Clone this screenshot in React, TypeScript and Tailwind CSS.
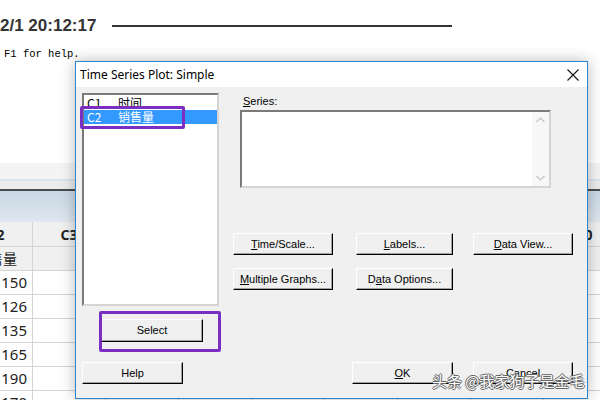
import type { ReactNode } from 'react';

const cols = ['C2', 'C3', 'C4', 'C5', 'C6', 'C7', 'C8', 'C9', 'C10'];
const values = ['150', '126', '135', '165', '190', '170'];

function Btn({ w, children, className = '' }: { w: string; children: ReactNode; className?: string }) {
  return (
    <div
      className={`flex h-[22px] ${w} shrink-0 items-center justify-center border border-t-white border-l-white border-r-black border-b-black bg-[#f0f0f0] text-[11px] text-black shadow-[inset_-1px_-1px_0_#a0a0a0] ${className}`}
    >
      <span>{children}</span>
    </div>
  );
}

function Sheet() {
  return (
    <div className="mt-[102px] flex flex-col" style={{ fontFamily: '"Noto Sans", "Noto Sans CJK SC", sans-serif' }}>
      <div className="h-[16px] bg-[#f4f4f4]" />
      <div className="h-[2px] bg-[#d6e4f1]" />
      <div className="h-[8px] bg-[#ececec]" />
      <div className="h-[2px] bg-[#4d4d4d]" />
      <div className="h-[31px] bg-gradient-to-b from-[#c9d7e4] to-[#dfe7ef]" />
      <div className="-ml-[40px] flex h-[25px] border-b border-[#d4d4d4] bg-[#f0f0f0]">
        {cols.map((c) => (
          <div key={c} className="flex w-[73px] shrink-0 items-center justify-center border-r border-[#d4d4d4] text-[14px] font-bold text-[#222]">
            {c}
          </div>
        ))}
      </div>
      <div className="-ml-[40px] flex h-[24px] border-b border-[#d4d4d4] bg-[#f0f0f0]">
        {cols.map((c, i) => (
          <div key={c} className="flex w-[73px] shrink-0 items-center justify-center border-r border-[#d4d4d4] text-[14px] text-[#222]">
            {i === 0 ? '销售量' : ''}
          </div>
        ))}
      </div>
      {values.map((v) => (
        <div key={v} className="-ml-[40px] flex h-[24px] border-b border-[#d4d4d4] bg-white">
          {cols.map((c, i) => (
            <div key={c} className="flex w-[73px] shrink-0 items-center justify-end border-r border-[#d4d4d4] pr-[5px] text-[15px] text-[#222]">
              {i === 0 ? v : ''}
            </div>
          ))}
        </div>
      ))}
    </div>
  );
}

function Dialog() {
  return (
    <div
      className="absolute left-[75px] top-[61px] flex h-[338px] w-[513px] flex-col border border-[#2a84cf] bg-[#f0f0f0] shadow-[0_0_14px_rgba(0,0,0,0.28)]"
      style={{ fontFamily: '"Liberation Sans", "Noto Sans CJK SC", sans-serif' }}
    >
      <div className="flex h-[25px] items-center justify-between bg-white pl-[4px] pr-[8px]">
        <span className="text-[12px] text-black" style={{ fontFamily: '"Noto Sans", sans-serif' }}>
          Time Series Plot: Simple
        </span>
        <svg width="12" height="12" viewBox="0 0 12 12">
          <path d="M0.5 0.5 L11.5 11.5 M11.5 0.5 L0.5 11.5" stroke="#111" strokeWidth="1.1" />
        </svg>
      </div>
      <div className="relative flex flex-1">
        <div className="flex w-[157px] shrink-0 flex-col pl-[6px]">
          <div className="mt-[6px] h-[213px] w-[137px] border-2 border-t-[#7a7a7a] border-l-[#7a7a7a] border-r-[#d4d4d4] border-b-[#d4d4d4] bg-white pt-[1px] text-[12px]" style={{ fontFamily: '"Noto Sans CJK SC", sans-serif' }}>
            <div className="flex h-[14px] items-center pl-[3px] leading-none text-black">
              <span className="w-[31px]">C1</span>
              <span>时间</span>
            </div>
            <div className="flex h-[14px] items-center bg-[#3399ff] pl-[3px] leading-none text-white">
              <span className="w-[31px]">C2</span>
              <span>销售量</span>
            </div>
          </div>
          <Btn w="w-[102px]" className="mt-[13px] ml-[19px] h-[23px]">Select</Btn>
          <Btn w="w-[101px]" className="mt-[20px]">Help</Btn>
        </div>
        <div className="flex flex-col">
          <div className="mt-[7px] ml-[10px] h-[14px] text-[11px] leading-[14px] text-black">
            <span className="underline">S</span>eries:
          </div>
          <div className="mt-[2px] ml-[7px] flex h-[78px] w-[311px] border-2 border-t-[#7a7a7a] border-l-[#7a7a7a] border-r-[#d4d4d4] border-b-[#d4d4d4] bg-white">
            <div className="flex-1" />
            <div className="flex w-[17px] flex-col items-center justify-between bg-[#f7f7f7] py-[5px]">
              <svg width="9" height="6" viewBox="0 0 9 6">
                <path d="M0.5 5 L4.5 1 L8.5 5" stroke="#c2c2c2" strokeWidth="1.2" fill="none" />
              </svg>
              <svg width="9" height="6" viewBox="0 0 9 6">
                <path d="M0.5 1 L4.5 5 L8.5 1" stroke="#c2c2c2" strokeWidth="1.2" fill="none" />
              </svg>
            </div>
          </div>
          <div className="mt-[45px] flex">
            <Btn w="w-[100px]"><span className="underline">T</span>ime/Scale...</Btn>
            <Btn w="w-[97px]" className="ml-[23px]"><span className="underline">L</span>abels...</Btn>
            <Btn w="w-[100px]" className="ml-[20px]"><span className="underline">D</span>ata View...</Btn>
          </div>
          <div className="mt-[13px] flex">
            <Btn w="w-[100px]"><span className="underline">M</span>ultiple Graphs...</Btn>
            <Btn w="w-[97px]" className="ml-[23px]">D<span className="underline">a</span>ta Options...</Btn>
          </div>
          <div className="mt-[72px] ml-[119px] flex">
            <Btn w="w-[101px]"><span className="underline">O</span>K</Btn>
            <Btn w="w-[100px]" className="ml-[20px]">Cancel</Btn>
          </div>
        </div>
        <div className="absolute left-[4px] top-[19px] h-[23px] w-[105px] rounded-[2px] border-[3px] border-[#7a2fc0]" />
        <div className="absolute left-[23px] top-[224px] h-[41px] w-[122px] rounded-[2px] border-[3px] border-[#7a2fc0]" />
      </div>
    </div>
  );
}

export default function App() {
  return (
    <div className="relative h-[400px] w-[600px] overflow-hidden bg-white">
      <div className="absolute left-0 top-0 flex w-full flex-col">
        <div className="flex h-[50px] items-center pt-[2px]">
          <span className="text-[17px] font-bold text-[#333]" style={{ fontFamily: '"Liberation Sans", sans-serif' }}>
            2/1 20:12:17
          </span>
          <div className="ml-[16px] h-[2px] w-[340px] bg-[#333]" />
        </div>
      </div>
      <div className="flex flex-col">
        <div className="h-[47px]" />
        <div className="pl-[4px] text-[10.5px] leading-[14px] text-black" style={{ fontFamily: '"Liberation Mono", "Liberation Serif", monospace' }}>
          F1 for help.
        </div>
        <Sheet />
      </div>
      <Dialog />
      <div
        className="absolute left-[432px] top-[370px] text-[15px] text-white"
        style={{
          fontFamily: '"Noto Sans CJK SC", sans-serif',
          textShadow: '1px 0 #666, -1px 0 #666, 0 1px #666, 0 -1px #666',
        }}
      >
        头条 @我家狗子是金毛
      </div>
    </div>
  );
}
